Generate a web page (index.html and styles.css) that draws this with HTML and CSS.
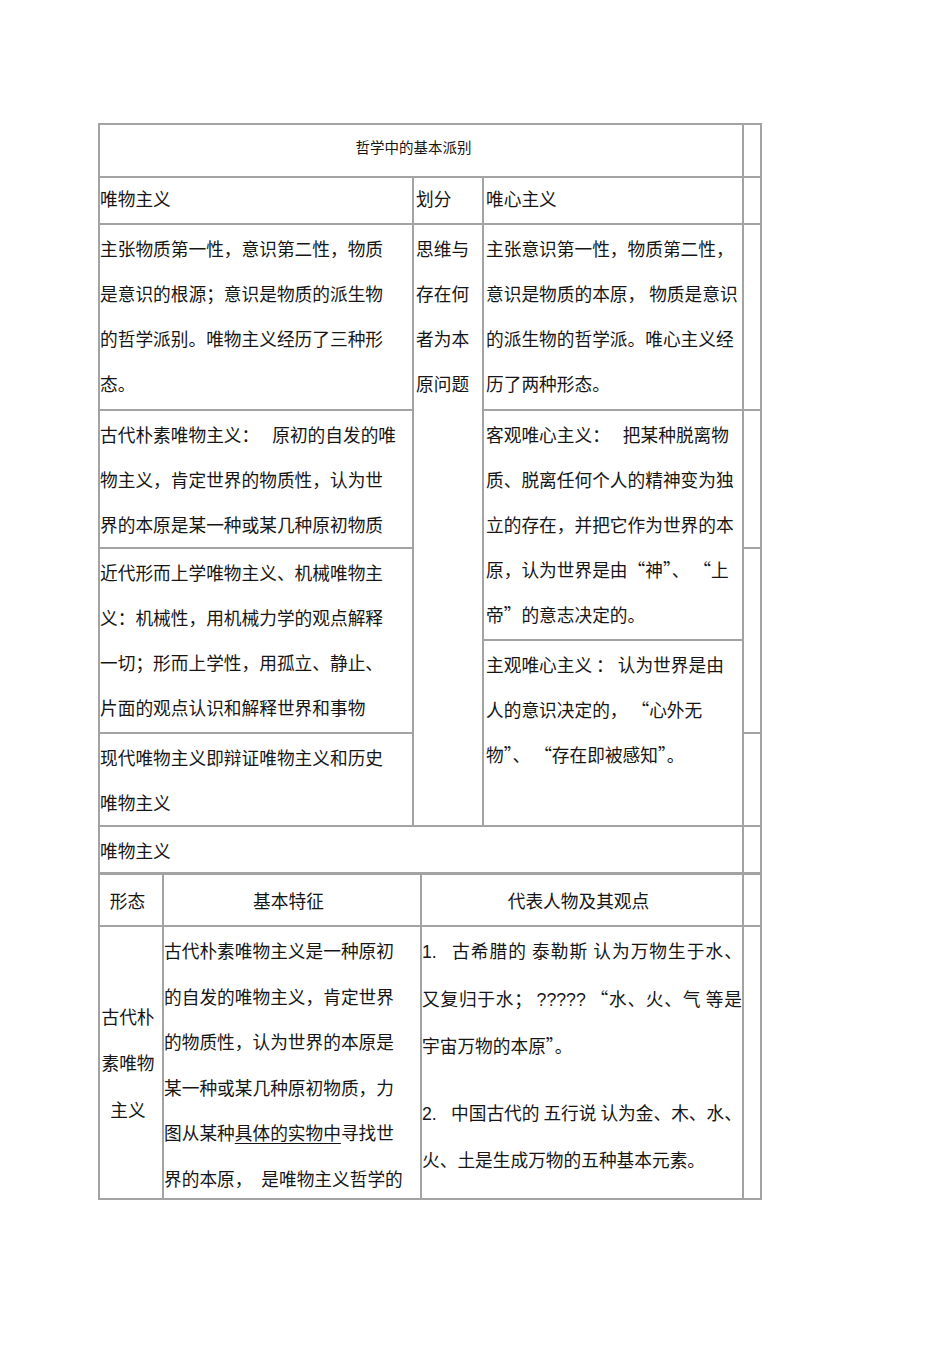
FILE: index.html
```html
<!DOCTYPE html>
<html lang="zh-CN">
<head>
<meta charset="utf-8">
<title>哲学中的基本派别</title>
<link rel="stylesheet" href="styles.css">
</head>
<body>
<div class="doc">
  <div class="sheet upper">
    <div class="cell title">哲学中的基本派别</div>
    <div class="cell e1"></div>

    <div class="cell head h1">唯物主义</div>
    <div class="cell head h2 pad">划分</div>
    <div class="cell head h3 pad">唯心主义</div>
    <div class="cell e2"></div>

    <div class="cell body l1">主张物质第一性，意识第二性，物质<br>是意识的根源；意识是物质的派生物<br>的哲学派别。唯物主义经历了三种形<br>态。</div>
    <div class="cell body mid pad">思维与<br>存在何<br>者为本<br>原问题</div>
    <div class="cell body r1 pad">主张意识第一性，物质第二性，<br>意识是物质的本原， 物质是意识<br>的派生物的哲学派。唯心主义经<br>历了两种形态。</div>
    <div class="cell e3"></div>

    <div class="cell body l2">古代朴素唯物主义：<span class="gap"></span>原初的自发的唯<br>物主义，肯定世界的物质性，认为世<br>界的本原是某一种或某几种原初物质</div>
    <div class="cell body r2 pad">客观唯心主义：<span class="gap"></span>把某种脱离物<br>质、脱离任何个人的精神变为独<br>立的存在，并把它作为世界的本<br>原，认为世界是由“神”、 “上<br>帝”的意志决定的。</div>
    <div class="cell e4"></div>

    <div class="cell body l3">近代形而上学唯物主义、机械唯物主<br>义：机械性，用机械力学的观点解释<br>一切；形而上学性，用孤立、静止、<br>片面的观点认识和解释世界和事物</div>
    <div class="cell e5"></div>

    <div class="cell body r3 pad">主观唯心主义 ： 认为世界是由<br>人的意识决定的， “心外无<br>物”、 “存在即被感知”。</div>

    <div class="cell body l4">现代唯物主义即辩证唯物主义和历史<br>唯物主义</div>
    <div class="cell e6"></div>

    <div class="cell sub">唯物主义</div>
    <div class="cell e7"></div>
  </div>

  <div class="sheet lower">
    <div class="cell colhead">形态</div>
    <div class="cell colhead">基本特征</div>
    <div class="cell colhead">代表人物及其观点</div>
    <div class="cell"></div>

    <div class="cell form"><div>古代朴<br>素唯物<br>主义</div></div>
    <div class="cell feature">古代朴素唯物主义是一种原初<br>的自发的唯物主义，肯定世界<br>的物质性，认为世界的本原是<br>某一种或某几种原初物质，力<br>图从某种<u>具体的实物中</u>寻找世<br>界的本原，&ensp;是唯物主义哲学的</div>
    <div class="cell people">
      <div class="para">
        <div class="line fill"><span class="num">1.</span>古希腊的 泰勒斯 认为万物生于水、</div>
        <div class="line fill">又复归于水； <span class="latin">?????</span> “水、火、气 等是</div>
        <div class="line">宇宙万物的本原”。</div>
      </div>
      <div class="para second">
        <div class="line"><span class="num">2.</span>中国古代的 五行说 认为金、木、水、</div>
        <div class="line">火、土是生成万物的五种基本元素。</div>
      </div>
    </div>
    <div class="cell"></div>
  </div>
</div>
</body>
</html>
```

FILE: styles.css
```css
body {
  margin: 0;
  background: #ffffff;
}

.doc {
  padding: 123px 0 0 98px;
}

.sheet {
  display: grid;
  width: 664px;
  box-sizing: border-box;
  background: #a3a3a3;
  gap: 2px;
}

.upper {
  padding: 2px;
  grid-template-columns: 312px 68px 258px 16px;
  grid-template-rows: 51px 45px 184px 136px 90px 91px 91px 45px;
  grid-template-areas:
    "title title title e1"
    "h1 h2 h3 e2"
    "l1 mid r1 e3"
    "l2 mid r2 e4"
    "l3 mid r2 e5"
    "l3 mid r3 e5"
    "l4 mid r3 e6"
    "sub sub sub e7";
}

.lower {
  padding: 1px 2px 2px;
  grid-template-columns: 62px 256px 320px 16px;
  grid-template-rows: 50px 271px;
}

.cell {
  background: #ffffff;
  font-family: "Noto Sans CJK SC", "Noto Sans CJK JP", sans-serif;
  font-size: 17.7px;
  color: #161616;
  white-space: nowrap;
  overflow: hidden;
  line-height: 45px;
}

.pad {
  padding-left: 2px;
}

.title {
  grid-area: title;
  font-size: 14.5px;
  line-height: 44px;
  text-align: center;
  padding-right: 15px;
}

.head {
  line-height: 41px;
}

.h1 { grid-area: h1; }
.h2 { grid-area: h2; }
.h3 { grid-area: h3; }
.l1 { grid-area: l1; }
.l2 { grid-area: l2; }
.l3 { grid-area: l3; }
.l4 { grid-area: l4; }
.mid { grid-area: mid; }
.r1 { grid-area: r1; }
.r2 { grid-area: r2; }
.r3 { grid-area: r3; }
.e1 { grid-area: e1; }
.e2 { grid-area: e2; }
.e3 { grid-area: e3; }
.e4 { grid-area: e4; }
.e5 { grid-area: e5; }
.e6 { grid-area: e6; }
.e7 { grid-area: e7; }

.body {
  padding-top: 1px;
}

.gap {
  display: inline-block;
  width: 13px;
}

.sub {
  grid-area: sub;
  line-height: 46px;
}

.colhead {
  line-height: 50px;
  text-align: center;
  padding-right: 7px;
}

.form {
  display: flex;
  align-items: center;
  justify-content: center;
  text-align: center;
  line-height: 46.5px;
  padding-right: 6px;
}

.feature {
  line-height: 45.6px;
  padding-top: 1px;
}

.feature u {
  text-decoration-thickness: 1px;
  text-underline-offset: 3px;
}

.people {
  line-height: 45.6px;
  padding-top: 1px;
  white-space: normal;
}

.people .second {
  margin-top: 21px;
}

.line {
  white-space: nowrap;
}

.line.fill {
  white-space: normal;
  text-align: justify;
  text-align-last: justify;
}

.num {
  display: inline-block;
  width: 29px;
  text-align: left;
  font-family: "Liberation Sans", Arial, sans-serif;
}

.latin {
  font-family: "Liberation Sans", Arial, sans-serif;
}
```
